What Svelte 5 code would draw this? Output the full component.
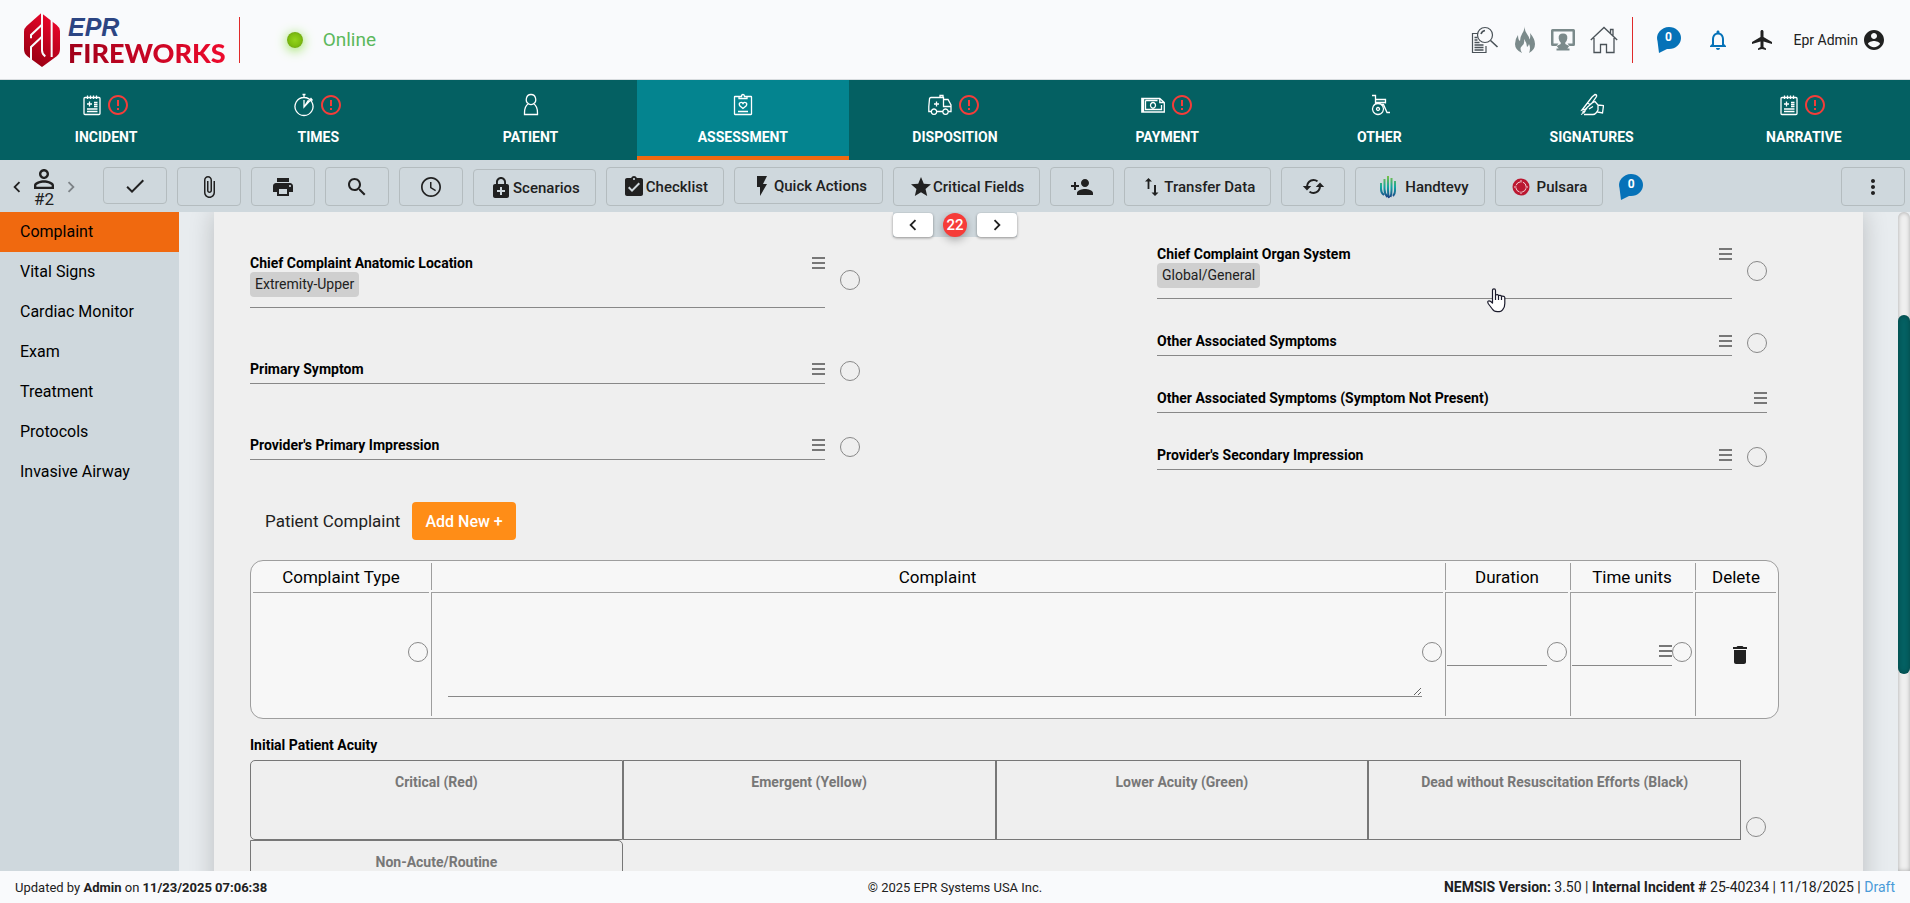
<script lang="ts">
  interface Tab {
    label: string;
    d: string;
    width: number;
    alert?: boolean;
    active?: boolean;
  }

  interface Tool {
    icon: string;
    label?: string;
    title: string;
    align?: string;
    size?: number;
  }

  interface Field {
    id: string;
    label: string;
    chip?: string;
    noPn?: boolean;
  }

  const notepad =
    'M5 4.500h14q1 0 1 1v15q0 1-1 1h-14q-1 0-1-1v-15q0-1 1-1zM7.500 2.500v3.500M10.500 2.500v3.500M13.500 2.500v3.500M16.500 2.500v3.500M9.500 8.500v5M7 11h5M14 9.500h3.500M14 11.500h3.500M14 13.500h3.500M7 16h10.500M7 18.500h10.500';

  const tabs: Tab[] = [
    { label: 'INCIDENT', width: 18, d: notepad, alert: true },
    { label: 'TIMES', width: 20, d: 'M12 4.500a9 9 0 1 0 .01 0zM12 4.500v-3M10.500 1.500h3M12 7v7l7-7.500M18.500 5l2 2.500M12 14l4.500-7', alert: true },
    { label: 'PATIENT', width: 24, d: 'M12 1.500a4.500 5 0 0 0-2.500 9.300Q5.500 13 5.500 20v1.500h13V20q0-7-4-9.200A4.500 5 0 0 0 12 1.500zM9.500 10.800q2.500 1.500 5 0' },
    { label: 'ASSESSMENT', width: 24, d: 'M8 3.500H4q-.5 0-.5.500v17q0 .5.500.5h16q.5 0 .5-.5V4q0-.5-.5-.5h-4M8 5.500V3.500h2.500q0-2 1.500-2t1.500 2H16v2zM12 15.500l-3-2.500q-1.500-2 0-3.200 1.800-1 3 .8 1.200-1.800 3-.8 1.500 1.200 0 3.200zM7 18.500h10', active: true },
    { label: 'DISPOSITION', width: 24, d: 'M3 18.500H.8v-5L1.500 6q0-1.500 1.500-1.500H15.500V13.500h7.500V18.500H20.500M9 18.500h6M15.500 6.500h4.500L23 12v2M12 4.500V2.500h3v2M8.500 8.500v5M6 11h5M6 16a2.700 2.700 0 1 0 .01 0zM17.500 16a2.700 2.700 0 1 0 .01 0z', alert: true },
    { label: 'PAYMENT', width: 24, d: 'M.8 5.500h18l4.500 4v9.500H.8zM2.500 5.500v13.500M1.600 5.500v13.500M18.800 5.500v4h4.500M4.500 7.500h12M4.500 7.500v9h16v-4.500M12 9.500a2.500 2.800 0 1 0 .01 0z', alert: true },
    { label: 'OTHER', width: 24, d: 'M5 2.500h3.500v9M8.500 6.500h10v4M8.500 9.500h10M11 10.500a5.500 5.500 0 1 0 .01 0zM11 14.500a1.500 1.500 0 1 0 .01 0zM14 11.500h2.500l3.500 8h3' },
    { label: 'SIGNATURES', width: 24, d: 'M2 17L12 4l3-2.500q2 0 1.500 2L12 10l-6.500 6zM7 10l3.500 1.500M1 21.500q3-1 4.500-4M2 19.500q4-2 6-6M4 21.500h9q2 0 4-2.500M12 10l3-1.500 3 3.500v5l-2 3M9 16l4-2.500M18 12l5.500.5-1 7.500-5-1' },
    { label: 'NARRATIVE', width: 18, d: notepad, alert: true }
  ];

  const icons: Record<string, string> = {
    check: 'M9 16.170L4.830 12l-1.420 1.410L9 19 21 7l-1.410-1.410z',
    clip: 'M16.500 6v11.500c0 2.210-1.790 4-4 4s-4-1.790-4-4V5c0-1.380 1.120-2.500 2.500-2.500s2.500 1.120 2.500 2.500v10.500c0 .55-.45 1-1 1s-1-.45-1-1V6H10v9.500c0 1.380 1.120 2.500 2.500 2.500s2.500-1.120 2.500-2.500V5c0-2.210-1.790-4-4-4S7 2.790 7 5v12.500c0 3.040 2.460 5.500 5.500 5.500s5.500-2.460 5.500-5.500V6h-1.500z',
    print: 'M19 8H5c-1.660 0-3 1.340-3 3v6h4v4h12v-4h4v-6c0-1.660-1.340-3-3-3zm-3 11H8v-5h8v5zm3-7c-.55 0-1-.45-1-1s.45-1 1-1 1 .45 1 1-.45 1-1 1zm-1-9H6v4h12V3z',
    search: 'M15.500 14h-.79l-.28-.27C15.410 12.590 16 11.110 16 9.500 16 5.910 13.090 3 9.500 3S3 5.910 3 9.500 5.910 16 9.500 16c1.610 0 3.090-.59 4.230-1.570l.27.28v.79l5 4.990L20.490 19l-4.990-5zm-6 0C7.010 14 5 11.990 5 9.500S7.010 5 9.500 5 14 7.010 14 9.500 11.990 14 9.500 14z',
    clock: 'M11.990 2C6.470 2 2 6.480 2 12s4.470 10 9.990 10C17.520 22 22 17.520 22 12S17.520 2 11.990 2zM12 20.300c-4.600 0-8.300-3.700-8.300-8.300s3.700-8.300 8.300-8.300 8.300 3.700 8.300 8.300-3.700 8.300-8.300 8.300zM12.500 7H11v6l5.250 3.150.75-1.230-4.500-2.670z',
    lock: 'M18 8h-1V6c0-2.760-2.240-5-5-5S7 3.240 7 6v2H6c-1.100 0-2 .9-2 2v10c0 1.100.9 2 2 2h12c1.100 0 2-.9 2-2V10c0-1.100-.9-2-2-2zM8.900 6c0-1.710 1.390-3.100 3.100-3.100s3.100 1.390 3.100 3.100v2H8.900V6zM16 16h-3v3h-2v-3H8v-2h3v-3h2v3h3v2z',
    checklist: 'M19 3h-4.180C14.400 1.840 13.300 1 12 1c-1.300 0-2.400.84-2.820 2H5c-1.100 0-2 .9-2 2v14c0 1.100.9 2 2 2h14c1.100 0 2-.9 2-2V5c0-1.100-.9-2-2-2zm-7 0c.55 0 1 .45 1 1s-.45 1-1 1-1-.45-1-1 .45-1 1-1zm-2 14l-4-4 1.410-1.410L10 14.170l6.590-6.590L18 9l-8 8z',
    flash: 'M7 2v11h3v9l7-12h-4l4-8z',
    star: 'M12 17.270L18.180 21l-1.640-7.030L22 9.240l-7.190-.61L12 2 9.190 8.630 2 9.240l5.460 4.730L5.820 21z',
    addPerson: 'M15 12c2.210 0 4-1.790 4-4s-1.790-4-4-4-4 1.790-4 4 1.790 4 4 4zm-9-2V7H4v3H1v2h3v3h2v-3h3v-2H6zm9 4c-2.670 0-8 1.340-8 4v2h16v-2c0-2.660-5.330-4-8-4z',
    transfer: 'M8.500 3L5 6.500h2.600V14h1.800V6.500H12zM14 10v7.500h-2.500L15 21l3.500-3.500H16V10z',
    refresh: 'M12 5.300A6.700 6.700 0 0 0 5.400 11.500H2.500L6.200 15.500l3.800-4H7.200A4.900 4.900 0 0 1 14.900 8.100L16.200 6.800A6.700 6.700 0 0 0 12 5.300zM17.800 8.500L14 12.500H16.800A4.900 4.900 0 0 1 9.100 15.900L7.800 17.200A6.700 6.700 0 0 0 18.600 12.500H21.500z',
    trash: 'M6 19c0 1.100.9 2 2 2h8c1.100 0 2-.9 2-2V7H6v12zM19 4h-3.500l-1-1h-5l-1 1H5v2h14V4z',
    account: 'M12 2C6.480 2 2 6.480 2 12s4.480 10 10 10 10-4.480 10-10S17.520 2 12 2zm0 3c1.660 0 3 1.340 3 3s-1.340 3-3 3-3-1.340-3-3 1.340-3 3-3zm0 14.200c-2.500 0-4.710-1.280-6-3.220.03-1.990 4-3.080 6-3.080 1.990 0 5.970 1.090 6 3.080-1.290 1.940-3.500 3.220-6 3.220z',
    plane: 'M22 16v-2l-8.500-5V3.500c0-.83-.67-1.500-1.500-1.500s-1.500.67-1.500 1.500V9L2 14v2l8.500-2.500V19L8 20.500V22l4-1 4 1v-1.500L13.500 19v-5.500L22 16z',
    bell: 'M12 22c1.100 0 2-.9 2-2h-4c0 1.100.9 2 2 2zm6-6v-5c0-3.070-1.630-5.640-4.500-6.320V4c0-.83-.67-1.500-1.500-1.500s-1.500.67-1.500 1.500v.68C7.640 5.360 6 7.920 6 11v5l-2 2v1h16v-1l-2-2zm-2 1H8v-6c0-2.480 1.510-4.500 4-4.500s4 2.020 4 4.500v6z',
    alert: 'M11 15h2v2h-2zm0-8h2v6h-2zm.99-5C6.470 2 2 6.480 2 12s4.470 10 9.990 10C17.520 22 22 17.520 22 12S17.520 2 11.990 2zM12 20c-4.420 0-8-3.580-8-8s3.580-8 8-8 8 3.580 8 8-3.580 8-8 8z',
    left: 'M15.410 7.410L14 6l-6 6 6 6 1.410-1.410L10.830 12z',
    right: 'M10 6L8.590 7.410 13.170 12l-4.580 4.590L10 18l6-6z',
    person: 'M12 5.900c1.160 0 2.100.94 2.100 2.100s-.94 2.100-2.100 2.100S9.900 9.160 9.900 8s.94-2.100 2.100-2.100m0 9c2.970 0 6.100 1.460 6.100 2.100v1.100H5.900V17c0-.64 3.130-2.100 6.100-2.100M12 4C9.790 4 8 5.790 8 8s1.790 4 4 4 4-1.790 4-4-1.790-4-4-4zm0 9c-2.670 0-8 1.340-8 4v3h16v-3c0-2.660-5.330-4-8-4z',
    more: 'M12 8c1.100 0 2-.9 2-2s-.9-2-2-2-2 .9-2 2 .9 2 2 2zm0 2c-1.100 0-2 .9-2 2s.9 2 2 2 2-.9 2-2-.9-2-2-2zm0 6c-1.100 0-2 .9-2 2s.9 2 2 2 2-.9 2-2-.9-2-2-2z'
  };

  const tools: Tool[] = [
    { icon: 'check', title: 'Validate', align: 'top' },
    { icon: 'clip', title: 'Attachments' },
    { icon: 'print', title: 'Print' },
    { icon: 'search', title: 'Search' },
    { icon: 'clock', title: 'History' },
    { icon: 'lock', label: 'Scenarios', title: 'Scenarios', align: 'bottom' },
    { icon: 'checklist', label: 'Checklist', title: 'Checklist' },
    { icon: 'flash', label: 'Quick Actions', title: 'Quick Actions', align: 'top' },
    { icon: 'star', label: 'Critical Fields', title: 'Critical Fields' },
    { icon: 'addPerson', title: 'Add patient' },
    { icon: 'transfer', label: 'Transfer Data', title: 'Transfer Data' },
    { icon: 'refresh', title: 'Sync', size: 27 }
  ];

  const sections = ['Complaint', 'Vital Signs', 'Cardiac Monitor', 'Exam', 'Treatment', 'Protocols', 'Invasive Airway'];

  const leftFields: Field[] = [
    { id: 'anatomic', label: 'Chief Complaint Anatomic Location', chip: 'Extremity-Upper' },
    { id: 'primary-symptom', label: 'Primary Symptom' },
    { id: 'primary-impression', label: "Provider's Primary Impression" }
  ];

  const rightFields: Field[] = [
    { id: 'organ', label: 'Chief Complaint Organ System', chip: 'Global/General' },
    { id: 'other-symptoms', label: 'Other Associated Symptoms' },
    { id: 'other-not-present', label: 'Other Associated Symptoms (Symptom Not Present)', noPn: true },
    { id: 'secondary-impression', label: "Provider's Secondary Impression" }
  ];

  const acuities = ['Critical (Red)', 'Emergent (Yellow)', 'Lower Acuity (Green)', 'Dead without Resuscitation Efforts (Black)', 'Non-Acute/Routine'];

  let activeSection = $state('Complaint');
  let scroll = { top: 15.6, height: 54.5 };
</script>

{#snippet icon(name: string, size = 24)}
  <svg width={size} height={size} viewBox="0 0 24 24" fill="currentColor" fill-rule="evenodd" aria-hidden="true"><path d={icons[name]} /></svg>
{/snippet}

{#snippet chat()}
  <button class="chat" aria-label="Messages">
    <svg width="24" height="26" viewBox="0 0 24 26" aria-hidden="true">
      <path d="M12 0a12 11 0 0 1 0 22H10L2 26 0.500 14A12 11 0 0 1 12 0z" fill="#0672b8" />
    </svg>
    <span>0</span>
  </button>
{/snippet}

{#snippet burger(label: string)}
  <button class="burger" aria-label={label}><i></i><i></i><i></i></button>
{/snippet}

{#snippet field(f: Field)}
  <div class="field">
    <div class="field-body">
      <div class="field-line">
        <label for={f.id}>{f.label}</label>
        <input id={f.id} type="text" />
        {@render burger('Options for ' + f.label)}
      </div>
      {#if f.chip}
        <div><span class="chip">{f.chip}</span></div>
      {/if}
    </div>
    {#if !f.noPn}
      <button class="circle" aria-label={'Pertinent negative for ' + f.label}></button>
    {/if}
  </div>
{/snippet}

<div class="page">
  <header>
    <a class="logo" href="#home">
      <svg width="36" height="54" viewBox="0 0 108 162" aria-hidden="true">
        <defs>
          <linearGradient id="shield" x1="0.800" y1="0" x2="0.300" y2="1">
            <stop offset="0" stop-color="#f0062c" />
            <stop offset="1" stop-color="#960013" />
          </linearGradient>
        </defs>
        <path d="M52 0L98 36Q108 44 108 54V108Q108 122 98 130L54 162 10 130Q0 122 0 108V56Q0 46 8 39z" fill="url(#shield)" />
        <path d="M21 76V66L53 36M21 144V102L53 72M54 0V112Q54 124 64 130M83 20V132" fill="none" stroke="#f9fafc" stroke-width="6" />
      </svg>
      <span class="brand"><em>EPR</em><strong>FIREWORKS</strong></span>
    </a>
    <i class="rule"></i>
    <i class="dot"></i>
    <span class="online">Online</span>

    <div class="header-icons">
      <a href="#search" aria-label="Search records">
        <svg width="28" height="28" viewBox="0 0 28 28" fill="none" stroke="#4a5258" aria-hidden="true">
          <path d="M7 7.500H1.500v19h13.500V20" stroke-width="1.200" />
          <path d="M3.500 11.500h3M3.500 14h3M3.500 16.500h5M3.500 19h9M3.500 21.500h9M3.500 24h9" stroke-width="1.300" />
          <circle cx="14" cy="9" r="7.500" fill="#f9fafc" stroke-width="1.200" /><path d="M10 8q1-3 4-3.500M19.500 14.500l7 6.500" stroke-width="1.600" />
        </svg>
      </a>
      <a href="#fire" aria-label="Fire">
        <svg width="22" height="28" viewBox="0 0 22 28" fill="#7b8a8b" aria-hidden="true">
          <path d="M11 0Q10 4 13 8T15 14Q17 12 16 7 21 13 21 18 21 24 15 27 17 22 15 18 14 21 13 21 13 17 10 13 11 18 8 20T8 27Q1 24 1 18 1 13 4 9 4 14 6 15 6 11 8 8T11 0z" />
        </svg>
      </a>
      <a href="#cad" aria-label="Dispatch">
        <svg width="24" height="24" viewBox="0 0 24 24" fill="#7b8a8b" aria-hidden="true">
          <path fill-rule="evenodd" d="M1.500 1h21q1.500 0 1.500 1.500v14q0 1.500-1.500 1.500h-4l-2-2.500H21.500V3.500H2.500v12H7.500l-2 2.500h-4q-1.500 0-1.500-1.500v-14q0-1.500 1.500-1.500z" />
          <path d="M12 5.500q4.800 0 4.300 5-.3 2.500-2 4v1.500l4 2-2 2.500h2.200V22.500H5.500V20.500h2.200l-2-2.500 4-2v-1.500q-1.700-1.500-2-4-.5-5 4.300-5z" />
        </svg>
      </a>
      <a href="#home" aria-label="Home">
        <svg width="28" height="28" viewBox="0 0 28 28" fill="none" stroke="#4a5258" stroke-width="1.300" aria-hidden="true">
          <path d="M.8 14L14 1.500 27.200 14M4 12v14.500h6.500v-8h6v8H24V12M20.500 7V3.500H23v6" />
        </svg>
      </a>
    </div>
    <i class="rule"></i>
    <div class="account">
      {@render chat()}
      <button class="plain bell" aria-label="Notifications">{@render icon('bell')}</button>
      <button class="plain" aria-label="Flights">{@render icon('plane')}</button>
      <button class="plain user">Epr Admin {@render icon('account')}</button>
    </div>
  </header>

  <nav class="tabs">
    {#each tabs as tab}
      <a href={'#' + tab.label.toLowerCase()} class:active={tab.active}>
        <span class="tab-icons">
          <svg width={tab.width} height="24" viewBox="{(24 - tab.width) / 2} 0 {tab.width} 24" fill="none" stroke="#fff" stroke-width="1.300" aria-hidden="true"><path d={tab.d} /></svg>
          {#if tab.alert}<span class="alert">{@render icon('alert')}</span>{/if}
        </span>
        {tab.label}
      </a>
    {/each}
  </nav>

  <div class="toolbar">
    <div class="patient">
      <button class="plain" aria-label="Previous patient">{@render icon('left', 22)}</button>
      <div class="patient-no">{@render icon('person', 30)}<span>#2</span></div>
      <button class="plain faded" aria-label="Next patient">{@render icon('right', 22)}</button>
    </div>
    {#each tools as tool}
      <button class="tool {tool.align ?? ''}" title={tool.title} aria-label={tool.title}>
        {@render icon(tool.icon, tool.size)}{#if tool.label}<span>{tool.label}</span>{/if}
      </button>
    {/each}
    <button class="tool">
      <svg width="34" height="24" viewBox="0 0 34 24" fill="none" stroke="url(#hand)" stroke-width="2" aria-hidden="true">
        <defs>
          <linearGradient id="hand" gradientUnits="userSpaceOnUse" x1="0" y1="1" x2="0" y2="23">
            <stop offset="0" stop-color="#7ac143" /><stop offset="0.500" stop-color="#12a5a0" /><stop offset="1" stop-color="#1d3f86" />
          </linearGradient>
        </defs>
        <path d="M10 8v6q0 4 3 6M13.500 4v10q0 5 3 8M17 1v14q0 5 1 8M20.500 3v12q0 4-1 7M24 6v10q0 3-2 5" />
      </svg>
      <span>Handtevy</span>
    </button>
    <button class="tool">
      <svg class="pulsara" width="18" height="18" viewBox="0 0 18 18" aria-hidden="true">
        <circle cx="9" cy="9" r="8.500" fill="#bb1730" />
        <circle cx="9" cy="9" r="5.200" fill="none" stroke="#f3d3d8" stroke-width="1" stroke-dasharray="5.500 2.670" stroke-dashoffset="-1.300" />
        <path d="M9 2v2.500M9 13.500v2.500M2 9h2.500M13.500 9h2.500" stroke="#f3d3d8" stroke-width="1" />
      </svg>
      <span>Pulsara</span>
    </button>
    {@render chat()}
    <button class="tool more" aria-label="More">{@render icon('more')}</button>
  </div>

  <div class="main">
    <div class="pager">
      <button aria-label="Previous">{@render icon('left', 22)}</button>
      <span class="count">22</span>
      <button aria-label="Next">{@render icon('right', 22)}</button>
    </div>

    <aside>
      {#each sections as section}
        <a href={'#' + section} class:active={section === activeSection} onclick={() => (activeSection = section)}>{section}</a>
      {/each}
    </aside>

    <div class="content">
      <main>
        <form class="fields">
          <div class="column left">
            {#each leftFields as f}{@render field(f)}{/each}
          </div>
          <div class="column right">
            {#each rightFields as f}{@render field(f)}{/each}
          </div>
        </form>

        <div class="complaint-head">
          <span>Patient Complaint</span>
          <button>Add New +</button>
        </div>

        <table>
          <thead>
            <tr>
              <th class="type">Complaint Type</th>
              <th>Complaint</th>
              <th class="mid">Duration</th>
              <th class="mid">Time units</th>
              <th class="delete">Delete</th>
            </tr>
          </thead>
          <tbody>
            <tr>
              <td><div class="cell"><span class="grow"></span><button class="circle" aria-label="No complaint type"></button></div></td>
              <td><div class="cell wide"><textarea aria-label="Complaint"></textarea><button class="circle" aria-label="No complaint"></button></div></td>
              <td><div class="cell"><span class="entry"><input type="text" aria-label="Duration" /></span><button class="circle" aria-label="No duration"></button></div></td>
              <td>
                <div class="cell">
                  <span class="entry"><input type="text" aria-label="Time units" />{@render burger('Time unit options')}</span>
                  <button class="circle" aria-label="No time units"></button>
                </div>
              </td>
              <td><button class="plain trash" aria-label="Delete complaint">{@render icon('trash')}</button></td>
            </tr>
          </tbody>
        </table>

        <h4 id="acuity">Initial Patient Acuity</h4>
        <div class="acuity">
          <div class="acuity-options" role="group" aria-labelledby="acuity">
            {#each acuities as acuity}
              <button>{acuity}</button>
            {/each}
          </div>
          <button class="circle" aria-label="Pertinent negative for acuity"></button>
        </div>
      </main>
    </div>

    <div class="scrollbar">
      <div class="thumb" style="top: {scroll.top}%; height: {scroll.height}%"></div>
    </div>

    <svg class="pointer" width="19" height="25" viewBox="0 0 19 25" fill="#fff" stroke="#1a1a2b" stroke-width="1.200" stroke-linejoin="round" aria-hidden="true">
      <path d="M5.500 14V2.500q0-1.700 1.500-1.700t1.500 1.700V7q2.500-1 3 .5 2.500-.7 3 .8 3-.5 3.300 1.200v6q0 4-2 6-1 2.200-5.500 2.200-3.500 0-5-2.700L1.500 16Q0 13.500 1.500 13q1.500-.5 4 2z" /><path d="M8.500 7v5M11.500 7.500V12M14.500 8.500V12" fill="none" />
    </svg>
  </div>

  <footer>
    <span class="updated">Updated by <b>Admin</b> on <b>11/23/2025 07:06:38</b></span>
    <span class="copy">© 2025 EPR Systems USA Inc.</span>
    <span class="version"><b>NEMSIS Version:</b> 3.50 | <b>Internal Incident #</b> 25-40234 | 11/18/2025 | <a href="#draft">Draft</a></span>
  </footer>
</div>

<style>
  :global(body) {
    margin: 0;
    font-family: Roboto, "Liberation Sans", sans-serif;
    color: #212121;
  }
  .page {
    display: flex;
    flex-direction: column;
    height: 100vh;
    overflow: hidden;
    background: #e8ecef;
  }
  a {
    color: inherit;
    text-decoration: none;
  }
  button,
  input,
  textarea {
    box-sizing: border-box;
    padding: 0;
    border: 0;
    background: none;
    font: inherit;
    color: inherit;
    outline: none;
  }
  svg {
    display: block;
    flex: none;
  }
  .plain {
    display: flex;
    align-items: center;
  }

  /* header */
  header {
    box-sizing: border-box;
    flex: none;
    display: flex;
    align-items: center;
    height: 80px;
    padding: 0 24px;
    background: #f9fafc;
    border-bottom: 1px solid #d8dcdf;
  }
  .logo {
    display: flex;
    align-items: center;
    gap: 8px;
  }
  .brand {
    display: flex;
    flex-direction: column;
    line-height: 26px;
  }
  .brand em {
    font: italic 700 25px/26px "Liberation Sans", sans-serif;
    color: #2c4583;
  }
  .brand strong {
    font-family: Lato, sans-serif;
    font-weight: 900;
    font-size: 27px;
    background: linear-gradient(90deg, #a0001a, #ee0a2d);
    background-clip: text;
    color: transparent;
  }
  .rule {
    width: 1px;
    height: 46px;
    background: #e02a2a;
  }
  .logo + .rule {
    margin-left: 13px;
  }
  .dot {
    width: 16px;
    height: 16px;
    margin-left: 47px;
    border-radius: 50%;
    background: radial-gradient(#93d41c, #7fbf10 50%, #5d9010);
    box-shadow: 0 2px 12px #8ee04a;
  }
  .online {
    margin-left: 20px;
    font-size: 19px;
    line-height: 20px;
    color: #5cb85c;
  }
  .header-icons {
    display: flex;
    align-items: center;
    gap: 15px;
    margin-left: auto;
    margin-right: 14px;
  }
  .account {
    display: flex;
    align-items: center;
    gap: 20px;
    margin-left: 24px;
  }
  .account .chat {
    margin-right: 5px;
  }
  .bell {
    color: #0672b8;
  }
  .user {
    gap: 4px;
    font-size: 14px;
  }
  .chat {
    display: grid;
    place-items: center;
    color: #fff;
    font-weight: 700;
    font-size: 12px;
    line-height: 20px;
  }
  .chat > * {
    grid-area: 1 / 1;
  }
  .chat span {
    align-self: start;
  }

  /* module tabs */
  .tabs {
    flex: none;
    display: flex;
    height: 80px;
    background: #046062;
  }
  .tabs a {
    box-sizing: border-box;
    flex: 1;
    display: flex;
    flex-direction: column;
    align-items: center;
    gap: 10px;
    padding-top: 13px;
    color: #fff;
    font-size: 14px;
    font-weight: 700;
    line-height: 20px;
  }
  .tabs a.active {
    background: #04848f;
    border-bottom: 4px solid #f0690f;
  }
  .tab-icons {
    display: flex;
    gap: 5px;
  }
  .alert {
    color: #f43d3a;
  }

  /* toolbar */
  .toolbar {
    box-sizing: border-box;
    flex: none;
    display: flex;
    gap: 10px;
    height: 52px;
    padding: 7px 5px 6px 0;
    background: #cfd8dd;
  }
  .patient {
    display: flex;
    align-items: center;
    justify-content: center;
    width: 88px;
    margin-right: 5px;
  }
  .patient-no {
    display: flex;
    flex-direction: column;
    align-items: center;
    width: 32px;
    padding-top: 2px;
    font-size: 17px;
    line-height: 16px;
  }
  .patient-no svg {
    margin: -5px 0 -3px;
  }
  .faded {
    color: #7d8387;
  }
  .tool {
    display: flex;
    align-items: center;
    justify-content: center;
    min-width: 64px;
    height: 39px;
    padding: 0 15px;
    border: 1px solid #b4bcbf;
    border-radius: 4px;
    font-size: 15px;
    font-weight: 500;
    white-space: nowrap;
  }
  .tool.top {
    height: 37px;
  }
  .tool.bottom {
    height: 37px;
    margin-top: 2px;
  }
  .pulsara {
    margin: 0 7px 0 1px;
  }
  .toolbar .chat {
    align-self: center;
    margin-left: 6px;
  }
  .more {
    margin-left: auto;
  }

  /* body */
  .main {
    position: relative;
    flex: 1;
    min-height: 0;
    display: flex;
    overflow: hidden;
  }
  .pager {
    position: absolute;
    top: 0;
    left: 50%;
    z-index: 1;
    display: flex;
    align-items: center;
    gap: 10px;
    padding-top: 1px;
    transform: translateX(-50%);
    background: #cfd8dd;
  }
  .pager button {
    display: flex;
    align-items: center;
    justify-content: center;
    width: 40px;
    height: 24px;
    border-radius: 4px;
    background: #fff;
    box-shadow: 0 1px 3px rgba(0, 0, 0, 0.4);
  }
  .count {
    width: 24px;
    height: 24px;
    border-radius: 50%;
    background: #f63c39;
    box-shadow: 0 3px 8px rgba(0, 0, 0, 0.3);
    color: #fff;
    font-size: 15px;
    font-weight: 500;
    line-height: 24px;
    text-align: center;
  }
  aside {
    flex: none;
    width: 179px;
    background: #cfd8dd;
  }
  aside a {
    display: block;
    padding-left: 20px;
    font-size: 16px;
    line-height: 40px;
    color: #000;
  }
  aside a.active {
    background: #f0690f;
  }
  .content {
    flex: 1;
    padding: 0 35px;
    overflow: hidden;
  }
  main {
    box-sizing: border-box;
    min-height: 100%;
    padding: 30px 84px 0 36px;
    background: #efefef;
    box-shadow: 0 0 24px rgba(0, 0, 0, 0.2);
  }
  .scrollbar {
    position: relative;
    flex: none;
    width: 12px;
    border-radius: 6px 6px 0 0;
    background: #efefef;
    box-shadow: inset 0 0 4px rgba(0, 0, 0, 0.3);
  }
  .thumb {
    position: absolute;
    left: 0;
    right: 0;
    border-radius: 6px;
    background: #046062;
    box-shadow: inset 0 0 5px rgba(0, 0, 0, 0.3);
  }
  .pointer {
    position: absolute;
    top: 76px;
    left: 1487px;
  }

  /* form */
  .fields {
    display: flex;
    gap: 297px;
    margin-right: 12px;
  }
  .column {
    flex: 1;
    display: flex;
    flex-direction: column;
    gap: 30px;
  }
  .column.left {
    gap: 49px;
    padding-top: 9px;
  }
  .field {
    display: flex;
    align-items: center;
    gap: 15px;
  }
  .field-body {
    flex: 1;
    padding: 3px 0 5px;
    border-bottom: 1px solid #888;
  }
  .field-line {
    display: flex;
    align-items: center;
    line-height: 18px;
    font-size: 14px;
  }
  .field-line label {
    color: #000;
    font-weight: 700;
  }
  .field-line input {
    flex: 1;
    min-width: 0;
    height: 18px;
  }
  .chip {
    display: inline-block;
    margin-bottom: 5px;
    padding: 0 5px;
    border-radius: 4px;
    background: #cfcfcf;
    font-size: 14px;
    line-height: 25px;
    vertical-align: top;
  }
  .burger {
    flex: none;
    display: flex;
    flex-direction: column;
    gap: 3px;
    width: 13px;
  }
  .burger i {
    height: 2px;
    background: #777;
  }
  .circle {
    flex: none;
    width: 20px;
    height: 20px;
    border: 1px solid #888;
    border-radius: 50%;
  }
  .complaint-head {
    display: flex;
    align-items: center;
    gap: 12px;
    margin: 32px 0 20px 15px;
    font-size: 17px;
  }
  .complaint-head button {
    height: 38px;
    padding: 0 13px;
    border-radius: 4px;
    background: #ff8d17;
    color: #fff;
    font-size: 16px;
    font-weight: 500;
  }

  table {
    width: 100%;
    table-layout: fixed;
    border: 1px solid #9e9e9e;
    border-radius: 13px;
    border-spacing: 2px;
    background: #f7f7f7;
  }
  th,
  td {
    box-sizing: border-box;
    padding: 0;
    border-left: 1px solid #9e9e9e;
  }
  th {
    height: 27px;
    color: #000;
    font-size: 17px;
    font-weight: 400;
  }
  td {
    height: 124px;
    border-top: 1px solid #9e9e9e;
  }
  th:first-child,
  td:first-child {
    border-left: 0;
  }
  .type {
    width: 176px;
  }
  .mid {
    width: 123px;
  }
  .delete {
    width: 81px;
  }
  .cell {
    display: flex;
    align-items: center;
    padding: 0 1px 6px;
  }
  .cell.wide {
    padding-left: 16px;
  }
  .grow {
    flex: 1;
  }
  textarea {
    flex: 1;
    height: 90px;
    border-bottom: 1px solid #888;
    resize: vertical;
  }
  .entry {
    flex: 1;
    display: flex;
    align-items: center;
    border-bottom: 1px solid #888;
  }
  .entry input {
    flex: 1;
    width: 100%;
    min-width: 0;
    height: 27px;
  }
  .trash {
    margin: 0 auto;
    padding-left: 8px;
  }

  h4 {
    margin: 17px 0 6px;
    color: #000;
    font-size: 14px;
    line-height: 18px;
  }
  .acuity {
    display: flex;
    align-items: flex-start;
    gap: 5px;
    padding-right: 13px;
  }
  .acuity-options {
    flex: 1;
    display: grid;
    grid-template-columns: repeat(4, 1fr);
  }
  .acuity-options button {
    height: 80px;
    padding-bottom: 36px;
    border: 1px solid #777;
    color: #777;
    font-size: 14px;
    font-weight: 700;
  }
  .acuity-options button:first-child {
    border-radius: 5px 0 0 5px;
  }
  .acuity-options button:last-child {
    border-radius: 0 5px 5px 0;
  }
  .acuity .circle {
    margin-top: 57px;
  }

  footer {
    flex: none;
    display: grid;
    grid-template-columns: 1fr auto 1fr;
    align-items: center;
    height: 32px;
    padding: 0 15px;
    background: #f9fafc;
    font-size: 13px;
  }
  .version {
    font-size: 14px;
    text-align: right;
  }
  .version a {
    color: #4a9bd8;
  }
</style>
